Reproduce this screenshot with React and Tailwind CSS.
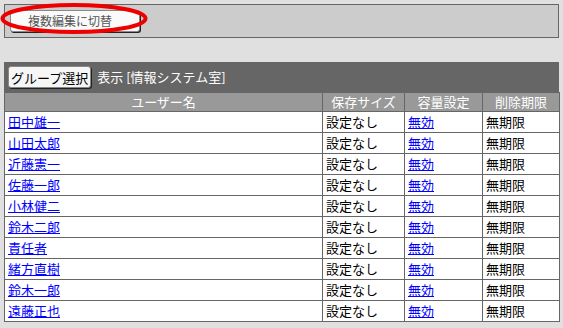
const users = [
  '田中雄一',
  '山田太郎',
  '近藤憲一',
  '佐藤一郎',
  '小林健二',
  '鈴木二郎',
  '責任者',
  '緒方直樹',
  '鈴木一郎',
  '遠藤正也',
]

const font = { fontFamily: '"Noto Sans CJK JP", "MS PGothic", sans-serif' }

export default function App() {
  return (
    <div
      className="w-[563px] h-[328px] bg-[#e0e0e0] text-[13px] text-black overflow-hidden pt-[4px] px-[4px]"
      style={font}
    >
      {/* 上部パネル */}
      <div className="relative h-[34px] w-[555px] border border-[#666] bg-[#cccccc] flex items-center pl-[5px]">
        <button
          type="button"
          className="h-[22px] w-[130px] rounded-[3px] bg-[#fafafa] border border-[#888] shadow-[1px_1px_0_#222] text-[12px] text-[#555] leading-none pl-[17px] text-left"
        >
          複数編集に切替
        </button>
        {/* 注釈の赤丸 */}
        <svg
          className="absolute left-[-5px] top-[-5px] pointer-events-none"
          width="152"
          height="38"
          viewBox="0 0 152 38"
        >
          <ellipse cx="74" cy="18.5" rx="71.5" ry="13.5" fill="none" stroke="#ee0000" strokeWidth="4" />
        </svg>
      </div>

      {/* 一覧 */}
      <div className="mt-[24px] w-[555px]">
        <div className="h-[30px] bg-[#666666] flex items-center gap-[6px] pl-[4px] text-white">
          <button
            type="button"
            className="h-[22px] px-[2px] rounded-[3px] bg-[#f6f6f6] border border-[#888] shadow-[1px_1px_0_#222] text-[13px] text-black leading-none"
          >
            グループ選択
          </button>
          <span>表示 [情報システム室]</span>
        </div>
        <table className="w-[555px] border-collapse table-fixed">
          <colgroup>
            <col className="w-[318px]" />
            <col className="w-[82px]" />
            <col className="w-[78px]" />
            <col className="w-[77px]" />
          </colgroup>
          <thead>
            <tr className="h-[19px] bg-[#999999] text-white">
              <th className="font-normal border border-[#666] p-0 leading-[18px]">ユーザー名</th>
              <th className="font-normal border border-[#666] p-0 leading-[18px]">保存サイズ</th>
              <th className="font-normal border border-[#666] p-0 leading-[18px]">容量設定</th>
              <th className="font-normal border border-[#666] p-0 leading-[18px]">削除期限</th>
            </tr>
          </thead>
          <tbody className="bg-white">
            {users.map((name) => (
              <tr key={name} className="h-[21px]">
                <td className="border border-[#666] py-0 px-[3px] leading-[20px]">
                  <a href="#" className="text-[#0000ff] underline">{name}</a>
                </td>
                <td className="border border-[#666] py-0 px-[3px] leading-[20px]">設定なし</td>
                <td className="border border-[#666] py-0 px-[3px] leading-[20px]">
                  <a href="#" className="text-[#0000ff] underline">無効</a>
                </td>
                <td className="border border-[#666] py-0 px-[3px] leading-[20px]">無期限</td>
              </tr>
            ))}
          </tbody>
        </table>
      </div>
    </div>
  )
}
